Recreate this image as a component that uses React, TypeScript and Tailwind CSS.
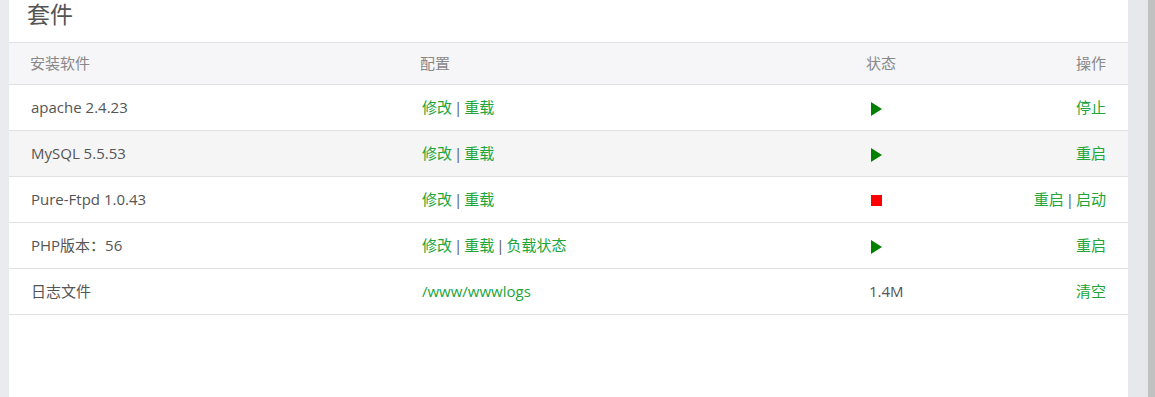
const FONT = { fontFamily: '"Open Sans", "Noto Sans CJK SC", sans-serif' };

// ── Types
interface SoftRow {
  name: string;
  config: string[];
  status: "run" | "stop" | string;
  actions: string[];
  hover?: boolean;
}

const rows: SoftRow[] = [
  { name: "apache 2.4.23", config: ["修改", "重载"], status: "run", actions: ["停止"] },
  { name: "MySQL 5.5.53", config: ["修改", "重载"], status: "run", actions: ["重启"], hover: true },
  { name: "Pure-Ftpd 1.0.43", config: ["修改", "重载"], status: "stop", actions: ["重启", "启动"] },
  { name: "PHP版本：56", config: ["修改", "重载", "负载状态"], status: "run", actions: ["重启"] },
  { name: "日志文件", config: ["/www/wwwlogs"], status: "1.4M", actions: ["清空"] },
];

const Links = ({ items }: { items: string[] }) => (
  <span>
    {items.map((t, i) => (
      <span key={t}>
        {i > 0 && <span className="text-[#555] mx-[2px]">|</span>}
        <a className="text-[#20a53a] cursor-pointer">{t}</a>
      </span>
    ))}
  </span>
);

const Status = ({ s }: { s: string }) => {
  if (s === "run")
    return (
      <svg width="12" height="14" viewBox="0 0 12 14" className="block ml-[5px] mt-[2px]">
        <path d="M0 0 L11 7 L0 14 Z" fill="#008000" />
      </svg>
    );
  if (s === "stop") return <span className="block ml-[5px] mt-[2px] w-[11px] h-[11px] bg-[#ff0000]" />;
  return <span className="ml-[3px] text-[#555]">{s}</span>;
};

export default function App() {
  return (
    <div className="h-[397px] w-[1155px] flex bg-[#e9ecef] overflow-hidden" style={FONT}>
      <div className="w-[9px]" />

      {/* ── Panel */}
      <div className="w-[1119px] bg-white flex flex-col">
        <div className="h-[43px] border-b border-[#e0e1e4] pl-[18px]">
          <h2 className="text-[23px] leading-[28px] text-[#555] font-normal">套件</h2>
        </div>

        {/* Header table */}
        <div className="grid grid-cols-[389px_446px_1fr_auto] items-center h-[42px] px-[22px] bg-[#f6f6f8] border-b border-[#e0e1e4] text-[15px] text-[#888]">
          <div className="-ml-[1px]">安装软件</div>
          <div>配置</div>
          <div>状态</div>
          <div className="text-right">操作</div>
        </div>

        {/* Rows */}
        {rows.map((r) => (
          <div
            key={r.name}
            className={`grid grid-cols-[389px_446px_1fr_auto] items-center h-[46px] px-[22px] border-b border-[#e0e1e4] text-[15px] text-[#555] ${
              r.hover ? "bg-[#f5f5f5]" : ""
            }`}
          >
            <div>{r.name}</div>
            <div className="pl-[2px]">
              <Links items={r.config} />
            </div>
            <div>
              <Status s={r.status} />
            </div>
            <div className="text-right">
              <Links items={r.actions} />
            </div>
          </div>
        ))}
      </div>

      <div className="w-[20px] bg-[#e7e8eb]" />
      <div className="w-[7px] bg-[#c1c1c1]" />
    </div>
  );
}
